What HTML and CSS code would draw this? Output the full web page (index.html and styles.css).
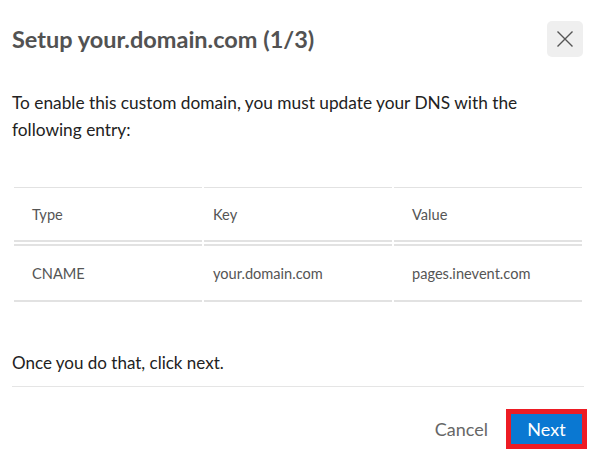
FILE: index.html
```html
<!DOCTYPE html>
<html>
<head>
<meta charset="utf-8">
<link rel="stylesheet" href="styles.css">
</head>
<body>
<div class="modal">
  <div class="modal-header">
    <h1 class="title">Setup your.domain.com (1/3)</h1>
    <button class="close" aria-label="Close">
      <svg width="18" height="18" viewBox="0 0 18 18"><path d="M1.5 1.5L16.5 16.5M16.5 1.5L1.5 16.5" stroke="#555" stroke-width="1.4" fill="none"/></svg>
    </button>
  </div>
  <p class="intro">To enable this custom domain, you must update your DNS with the following entry:</p>
  <table class="dns">
    <thead>
      <tr><th>Type</th><th>Key</th><th>Value</th></tr>
    </thead>
    <tbody>
      <tr><td>CNAME</td><td>your.domain.com</td><td>pages.inevent.com</td></tr>
    </tbody>
  </table>
  <p class="outro">Once you do that, click next.</p>
  <div class="footer">
    <button class="btn-cancel">Cancel</button>
    <span class="highlight"><button class="btn-next">Next</button></span>
  </div>
</div>
</body>
</html>
```
FILE: styles.css
```css
html, body {
  margin: 0;
  padding: 0;
  background: #fff;
}
body {
  font-family: Lato, "Open Sans", sans-serif;
  color: #222;
}
.modal {
  width: 572px;
  padding: 0 12px;
}
.modal-header {
  display: flex;
  align-items: center;
  justify-content: space-between;
  height: 36px;
  padding-top: 21px;
}
.title {
  margin: 0;
  font-size: 23.5px;
  font-weight: 700;
  color: #525252;
}
.close {
  width: 36px;
  height: 36px;
  margin-right: 1px;
  border: none;
  border-radius: 5px;
  background: #efefef;
  display: flex;
  align-items: center;
  justify-content: center;
  padding: 0;
}
.intro {
  margin: 32px 0 0;
  padding-right: 24px;
  font-size: 17.3px;
  line-height: 27px;
  color: #222;
}
.dns {
  margin-top: 44px;
  width: 572px;
  table-layout: fixed;
  border-collapse: separate;
  border-spacing: 2px 0;
  font-size: 14.6px;
  color: #555;
}
.dns th, .dns td {
  text-align: left;
  font-weight: 400;
  padding: 0 0 0 18px;
}
.dns th {
  height: 52px;
  border-top: 1px solid #e2e2e2;
  border-bottom: 2px solid #e2e2e2;
}
.dns td {
  height: 54px;
  border-top: 2px solid #e2e2e2;
  border-bottom: 2px solid #e2e2e2;
}
.dns th:nth-child(2), .dns td:nth-child(2) {
  padding-left: 9px;
}
.dns tbody::before {
  content: "";
  display: table-row;
  height: 2px;
}
.outro {
  margin: 49px 0 0;
  font-size: 17px;
  line-height: 24px;
  padding-bottom: 11px;
  border-bottom: 1px solid #e5e5e5;
  color: #222;
}
.footer {
  display: flex;
  justify-content: flex-end;
  align-items: center;
  gap: 18px;
  margin-top: 22px;
}
.btn-cancel {
  border: none;
  background: none;
  font-family: inherit;
  font-size: 18px;
  color: #666;
  padding: 0;
}
.highlight {
  display: inline-flex;
  border: 5px solid #ed1c24;
  margin-right: -3px;
}
.btn-next {
  border: none;
  background: #0a78d2;
  color: #fff;
  font-family: inherit;
  font-size: 18px;
  width: 71px;
  height: 30px;
  padding: 0;
}
```
